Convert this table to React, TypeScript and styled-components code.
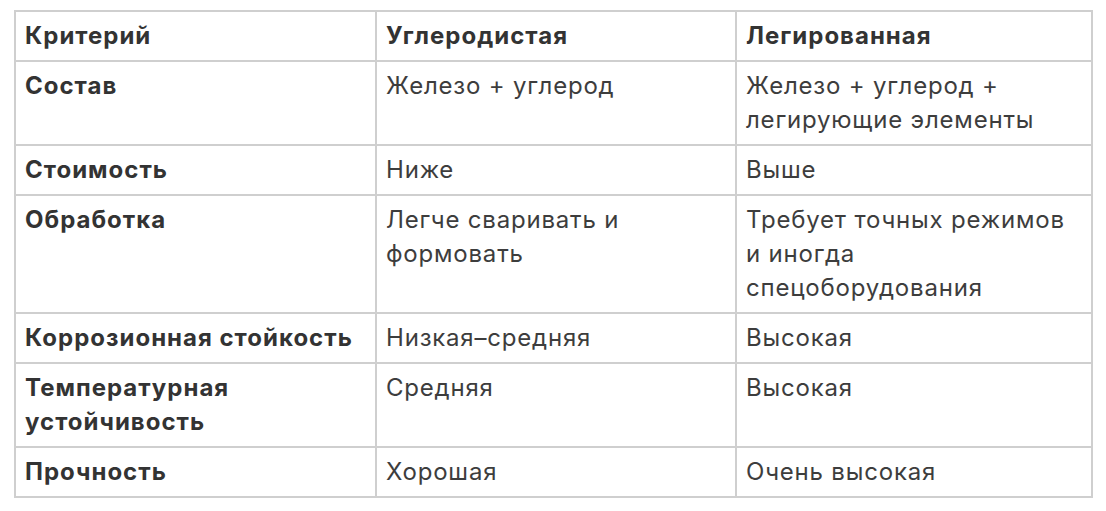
import React from "react";
import styled, { createGlobalStyle } from "styled-components";

const GlobalStyle = createGlobalStyle`
  html, body {
    margin: 0;
    padding: 0;
    background: #ffffff;
  }
  body {
    font-family: Inter, "Noto Sans", "Liberation Sans", sans-serif;
    color: #333333;
  }
`;

type Row = { label: string; carbon: string; alloy: string };

const rows: Row[] = [
  { label: "Состав", carbon: "Железо + углерод", alloy: "Железо + углерод + легирующие элементы" },
  { label: "Стоимость", carbon: "Ниже", alloy: "Выше" },
  {
    label: "Обработка",
    carbon: "Легче сваривать и формовать",
    alloy: "Требует точных режимов и иногда спецоборудования",
  },
  { label: "Коррозионная стойкость", carbon: "Низкая–средняя", alloy: "Высокая" },
  { label: "Температурная устойчивость", carbon: "Средняя", alloy: "Высокая" },
  { label: "Прочность", carbon: "Хорошая", alloy: "Очень высокая" },
];

const Page = styled.div`
  padding: 10px 14px 0 14px;
`;

const Table = styled.table`
  border-collapse: collapse;
  table-layout: fixed;
  width: 1079px;
  font-size: 24px;
  line-height: 34px;
`;

const Cell = styled.td<{ $bold?: boolean }>`
  border: 2px solid #cfcfcf;
  padding: 7px 10px 7px 9px;
  vertical-align: top;
  text-align: left;
  font-weight: ${(p) => (p.$bold ? 700 : 400)};
  color: ${(p) => (p.$bold ? "#333333" : "#3d3d3d")};
  letter-spacing: ${(p) => (p.$bold ? "1px" : "0.8px")};
`;

const HeadCell = styled(Cell).attrs({ as: "th" })``;

const App: React.FC = () => {
  return (
    <Page>
      <GlobalStyle />
      <Table>
        <colgroup>
          <col style={{ width: 361 }} />
          <col style={{ width: 360 }} />
          <col />
        </colgroup>
        <thead>
          <tr>
            <HeadCell $bold>Критерий</HeadCell>
            <HeadCell $bold>Углеродистая</HeadCell>
            <HeadCell $bold>Легированная</HeadCell>
          </tr>
        </thead>
        <tbody>
          {rows.map((r) => (
            <tr key={r.label}>
              <Cell $bold>{r.label}</Cell>
              <Cell>{r.carbon}</Cell>
              <Cell>{r.alloy}</Cell>
            </tr>
          ))}
        </tbody>
      </Table>
    </Page>
  );
};

export default App;
